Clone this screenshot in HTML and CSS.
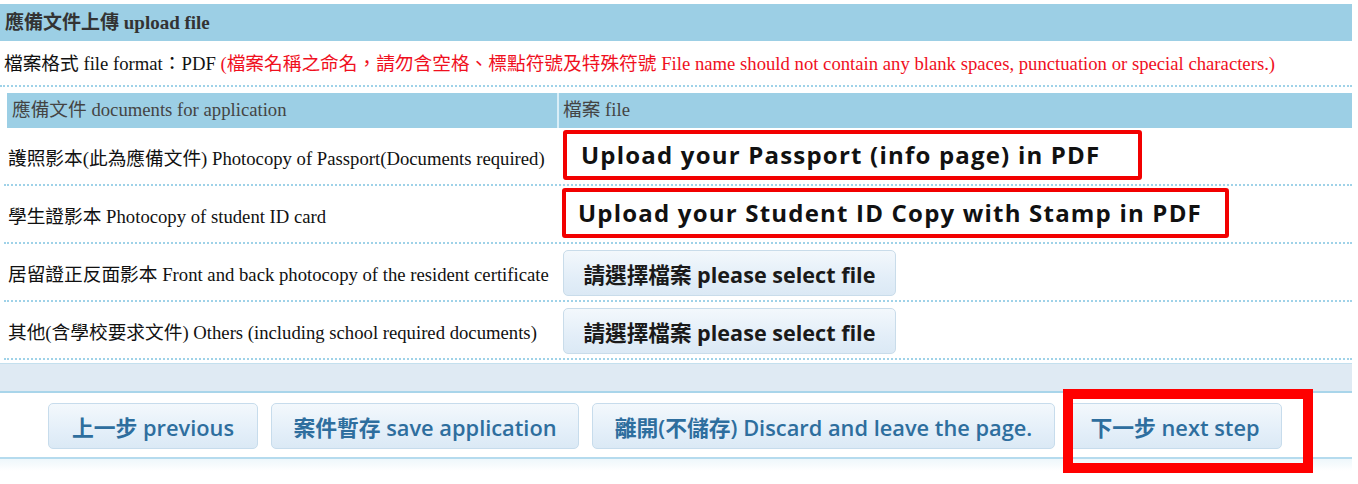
FILE: index.html
```html
<!DOCTYPE html>
<html lang="zh-Hant">
<head>
<meta charset="utf-8">
<title>應備文件上傳 upload file</title>
<link rel="stylesheet" href="styles.css">
</head>
<body>
<div class="page">
  <div class="title">應備文件上傳 upload file</div>
  <div class="format">檔案格式 file format：PDF <span class="warn">(檔案名稱之命名，請勿含空格、標點符號及特殊符號 File name should not contain any blank spaces, punctuation or special characters.)</span></div>
  <div class="doc-table">
    <div class="thead">
      <div class="th th-doc">應備文件 documents for application</div>
      <div class="th th-file">檔案 file</div>
    </div>
    <div class="row">
      <div class="cell-doc">護照影本(此為應備文件) Photocopy of Passport(Documents required)</div>
      <div class="cell-file"><div class="note note-passport">Upload your Passport (info page) in PDF</div></div>
    </div>
    <div class="row">
      <div class="cell-doc">學生證影本 Photocopy of student ID card</div>
      <div class="cell-file"><div class="note note-student">Upload your Student ID Copy with Stamp in PDF</div></div>
    </div>
    <div class="row">
      <div class="cell-doc">居留證正反面影本 Front and back photocopy of the resident certificate</div>
      <div class="cell-file"><button class="select-btn">請選擇檔案 please select file</button></div>
    </div>
    <div class="row">
      <div class="cell-doc">其他(含學校要求文件) Others (including school required documents)</div>
      <div class="cell-file"><button class="select-btn">請選擇檔案 please select file</button></div>
    </div>
  </div>
  <div class="band"></div>
  <div class="actions">
    <button class="act act-prev">上一步 previous</button>
    <button class="act act-save">案件暫存 save application</button>
    <button class="act act-leave">離開(不儲存) Discard and leave the page.</button>
    <button class="act act-next">下一步 next step</button>
    <div class="next-mark"></div>
  </div>
</div>
</body>
</html>
```
FILE: styles.css
```css
* { box-sizing: border-box; }
html, body { margin: 0; padding: 0; background: #fff; }
body {
  font-family: "Liberation Serif", "Noto Sans CJK TC", serif;
  color: #222;
  height: 484px;
  overflow: hidden;
}
.page { width: 1352px; }

.title {
  margin-top: 4px;
  height: 37px;
  line-height: 37px;
  background: #9ccfe5;
  padding-left: 5px;
  font-weight: bold;
  font-size: 19px;
  color: #333;
}

.format {
  height: 46px;
  line-height: 46px;
  padding-left: 4px;
  font-size: 18.7px;
  color: #111;
  border-bottom: 2px dotted #9fd2e8;
  white-space: nowrap;
}
.warn { color: #f0101e; }

.doc-table { margin: 6px 0 0 4px; }
.thead {
  display: grid;
  grid-template-columns: 550px 1fr;
  margin-left: 3px;
  height: 35px;
  background: #9ccfe5;
}
.th {
  line-height: 34px;
  padding-left: 5px;
  font-size: 18.7px;
  color: #444;
  white-space: nowrap;
}
.th-file { border-left: 2px solid #d9eef7; padding-left: 4px; }

.row {
  display: grid;
  grid-template-columns: 553px 1fr;
  align-items: center;
  height: 58px;
  border-bottom: 2px dotted #9fd2e8;
}
.cell-doc {
  padding-left: 4px;
  font-size: 18.7px;
  color: #111;
  white-space: nowrap;
}
.cell-file { padding-left: 6px; display: flex; }

.note {
  height: 50px;
  border: 4px solid #f20000;
  border-radius: 3px;
  font-family: "Open Sans", "Noto Sans CJK TC", sans-serif;
  font-weight: bold;
  font-size: 24px;
  letter-spacing: 1.2px;
  line-height: 42px;
  color: #111;
  white-space: nowrap;
  margin-top: -2px;
}
.note-passport { width: 579px; padding-left: 14px; }
.note-student { width: 667px; padding-left: 12px; margin-left: -1px; }

.select-btn {
  width: 333px;
  height: 46px;
  border: 1px solid #c9dcea;
  border-radius: 5px;
  background: linear-gradient(#f3f8fc, #e3eef8 60%, #dbe9f5);
  font-family: "Open Sans", "Noto Sans CJK TC", sans-serif;
  font-weight: bold;
  font-size: 21.6px;
  color: #1a1a1a;
  padding: 0;
  margin-top: 2px;
}

.band {
  margin-top: 3px;
  height: 30px;
  background: #dfeaf3;
  border-top: 1px solid #c4e0ee;
  border-bottom: 2px solid #a9d5ea;
}

.actions {
  position: relative;
  display: flex;
  gap: 13px;
  padding: 10px 0 0 48px;
  height: 66px;
  border-bottom: 2px solid #b5dbee;
}
.actions::after {
  content: "";
  position: absolute;
  left: 0; right: 0; bottom: -14px;
  height: 12px;
  background: linear-gradient(#eef7fb, #fff);
}
.act {
  height: 46px;
  border: 1px solid #c7dcec;
  border-radius: 5px;
  background: linear-gradient(#f3f8fc, #e4eff9 60%, #dbe9f5);
  font-family: "Open Sans", "Noto Sans CJK TC", sans-serif;
  font-weight: 600;
  font-size: 21.8px;
  color: #2e6e9e;
  padding: 0;
  white-space: nowrap;
}
.act-prev { width: 210px; }
.act-save { width: 308px; }
.act-leave { width: 463px; }
.act-next { width: 214px; }

.next-mark {
  position: absolute;
  z-index: 2;
  left: 1063px;
  top: -4px;
  width: 250px;
  height: 84px;
  border: 10px solid #ff0000;
}
```
